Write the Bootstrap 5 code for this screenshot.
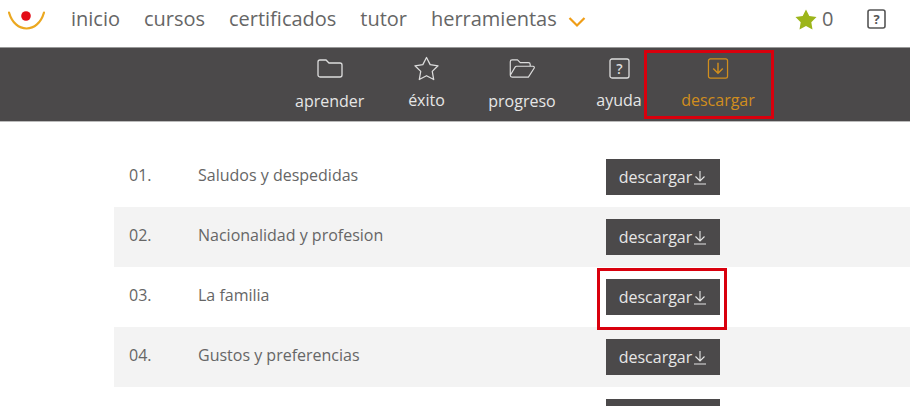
<!DOCTYPE html>
<html lang="es"><head><meta charset="utf-8"><title>descargar</title>
<link href="https://cdn.jsdelivr.net/npm/bootstrap@5.3.0/dist/css/bootstrap.min.css" rel="stylesheet">
<script src="https://cdn.jsdelivr.net/npm/bootstrap@5.3.0/dist/js/bootstrap.bundle.min.js"></script>
<style>
html,body{height:406px;overflow:hidden}
body{font-family:"Open Sans",sans-serif;color:#666;background:#fff;width:910px}
.topbar{height:48px;padding:0 0 9px 8px;border-bottom:1px solid #999}
.brand-mark{width:37px;height:24px;margin-right:26px;flex:none}
.toplink{font-size:20px;color:#666;text-decoration:none;line-height:26px;margin-right:23.9px}
.chev{margin-left:-13px;position:relative;top:3px}
.score{font-size:20px;color:#666;margin-left:auto;gap:5px;width:39px;margin-right:33px}
.helpicon{margin-right:24px;flex:none}
.subbar{height:74px;background:#4b494a;position:relative;padding-left:295px;border-bottom:1px solid #bbb}
.subitem{color:#e6e6e6;font-size:16px;text-decoration:none;line-height:22px;padding-top:8px;height:73px}
.subitem svg{display:block;margin-left:auto;margin-right:auto}
.ico-folder{margin-top:3px;margin-bottom:12px}
.ico-star{margin-bottom:8px}
.ico-box{margin-top:2px;margin-bottom:10px}
.subitem.active-item{color:#d18e1d}
.w1{width:69px;margin-right:44px}.w2{width:37px;margin-right:43px}.w3{width:68px;margin-right:40px}.w4{width:46px;margin-right:39px}.w5{width:74px}
.lesson-list{margin:25px 0 0 114px;height:259px;overflow:hidden}
.lesson{height:60px;padding:0 0 0 15px}
.lesson:nth-child(even){background:#f3f3f3}
.lesson-no{width:69px;font-size:16px;position:relative;top:-2px}
.lesson-name{width:408px;font-size:16px;position:relative;top:-2px}
.dl-btn{background:#4b494a;color:#e6e6e6;width:114px;height:36px;border:0;border-radius:0;font-size:16px;padding:0;gap:1px;display:flex;align-items:center;justify-content:center;--bs-btn-hover-bg:#4b494a;--bs-btn-hover-color:#e6e6e6}
.callout{position:absolute;border:3px solid #d9000d;pointer-events:none}
.c1{left:644px;top:2px;width:130px;height:69px}
.c2{left:597px;top:268px;width:130px;height:62px}
</style></head><body>
<nav class="topbar d-flex align-items-center">
  <svg class="brand-mark" viewBox="0 0 37 24" aria-label="logo"><path d="M1 5.500 C4 16 11 21.500 18.500 21.500 C26 21.500 33 16 36 5.500" fill="none" stroke="#eba821" stroke-width="2.200" stroke-linecap="round"/><circle cx="18" cy="9" r="4.800" fill="#e30c17"/></svg>
  <a class="toplink" href="#">inicio</a><a class="toplink" href="#">cursos</a><a class="toplink" href="#">certificados</a><a class="toplink" href="#">tutor</a><a class="toplink" href="#">herramientas</a>
  <svg class="chev" width="18" height="12" viewBox="0 0 18 12"><path d="M1.500 2 L9 9.500 L16.500 2" fill="none" stroke="#ef9d16" stroke-width="2.200"/></svg>
  <div class="score d-flex align-items-center">
    <svg width="22" height="21" viewBox="0 0 22 21" class="flex-shrink-0"><path d="M11 .5 L14.300 7 L21.500 8.100 L16.300 13.200 L17.500 20.500 L11 17.100 L4.500 20.500 L5.700 13.200 L.5 8.100 L7.700 7 Z" fill="#9cb51a"/></svg><span>0</span>
  </div>
  <svg class="helpicon" width="19" height="20" viewBox="0 0 19 20"><rect x="1" y="1" width="17" height="18" rx="2" fill="none" stroke="#555" stroke-width="1.600"/><text x="9.500" y="15" text-anchor="middle" font-family="Open Sans" font-weight="700" font-size="13" fill="#555">?</text></svg>
</nav>
<div class="subbar d-flex">
  <a class="subitem w1 text-center" href="#"><svg class="ico-folder" width="26" height="19" viewBox="0 0 26 19"><path d="M1 3 a2 2 0 0 1 2-2 h6 l3 3 h11 a2 2 0 0 1 2 2 v10 a2 2 0 0 1 -2 2 h-20 a2 2 0 0 1 -2-2 z" fill="none" stroke="#ddd" stroke-width="1.300"/></svg>aprender</a>
  <a class="subitem w2 text-center" href="#"><svg class="ico-star" width="27" height="25" viewBox="0 0 27 26"><path d="M13.500 1.500 L17.300 9 L25.500 10.200 L19.500 16 L21 24.500 L13.500 20.500 L6 24.500 L7.500 16 L1.500 10.200 L9.700 9 Z" fill="none" stroke="#ddd" stroke-width="1.300" stroke-linejoin="round"/></svg>éxito</a>
  <a class="subitem w3 text-center" href="#"><svg class="ico-folder" width="29" height="19" viewBox="0 0 29 21"><path d="M1 18 V3 a2 2 0 0 1 2-2 h6 l3 3 h9 a2 2 0 0 1 2 2 v2 M1 18 a2 2 0 0 0 2 2 h18 l6.500-10 a1.500 1.500 0 0 0 -1.300-2 H8 a2 2 0 0 0 -1.700 1 L1 18" fill="none" stroke="#ddd" stroke-width="1.300" stroke-linejoin="round"/></svg>progreso</a>
  <a class="subitem w4 text-center" href="#"><svg class="ico-box" width="21" height="21" viewBox="0 0 21 21"><rect x="1" y="1" width="19" height="19" rx="2" fill="none" stroke="#ddd" stroke-width="1.300"/><text x="10.500" y="16" text-anchor="middle" font-family="Open Sans" font-weight="600" font-size="14" fill="#ddd">?</text></svg>ayuda</a>
  <a class="subitem w5 text-center active-item" href="#"><svg class="ico-box" width="22" height="21" viewBox="0 0 22 22"><rect x="1" y="1" width="20" height="20" rx="2" fill="none" stroke="#d18e1d" stroke-width="1.300"/><path d="M11 5 V16 M6 11 L11 16 L16 11" fill="none" stroke="#d18e1d" stroke-width="1.500"/></svg>descargar</a>
  <div class="callout c1"></div>
</div>
<div class="lesson-list">
  <div class="lesson d-flex align-items-center"><span class="lesson-no">01.</span><span class="lesson-name">Saludos y despedidas</span><button class="btn dl-btn">descargar<svg width="14" height="15" viewBox="0 0 14 15"><path d="M7 1 V11 M2.500 6.500 L7 11 L11.500 6.500 M1 14 H13" fill="none" stroke="#e6e6e6" stroke-width="1.100"/></svg></button></div>
  <div class="lesson d-flex align-items-center"><span class="lesson-no">02.</span><span class="lesson-name">Nacionalidad y profesion</span><button class="btn dl-btn">descargar<svg width="14" height="15" viewBox="0 0 14 15"><path d="M7 1 V11 M2.500 6.500 L7 11 L11.500 6.500 M1 14 H13" fill="none" stroke="#e6e6e6" stroke-width="1.100"/></svg></button></div>
  <div class="lesson d-flex align-items-center"><span class="lesson-no">03.</span><span class="lesson-name">La familia</span><button class="btn dl-btn">descargar<svg width="14" height="15" viewBox="0 0 14 15"><path d="M7 1 V11 M2.500 6.500 L7 11 L11.500 6.500 M1 14 H13" fill="none" stroke="#e6e6e6" stroke-width="1.100"/></svg></button></div>
  <div class="lesson d-flex align-items-center"><span class="lesson-no">04.</span><span class="lesson-name">Gustos y preferencias</span><button class="btn dl-btn">descargar<svg width="14" height="15" viewBox="0 0 14 15"><path d="M7 1 V11 M2.500 6.500 L7 11 L11.500 6.500 M1 14 H13" fill="none" stroke="#e6e6e6" stroke-width="1.100"/></svg></button></div>
  <div class="lesson d-flex align-items-center"><span class="lesson-no"></span><span class="lesson-name"></span><button class="btn dl-btn" aria-label="descargar"></button></div>
</div>
<div class="callout c2"></div>
</body></html>
